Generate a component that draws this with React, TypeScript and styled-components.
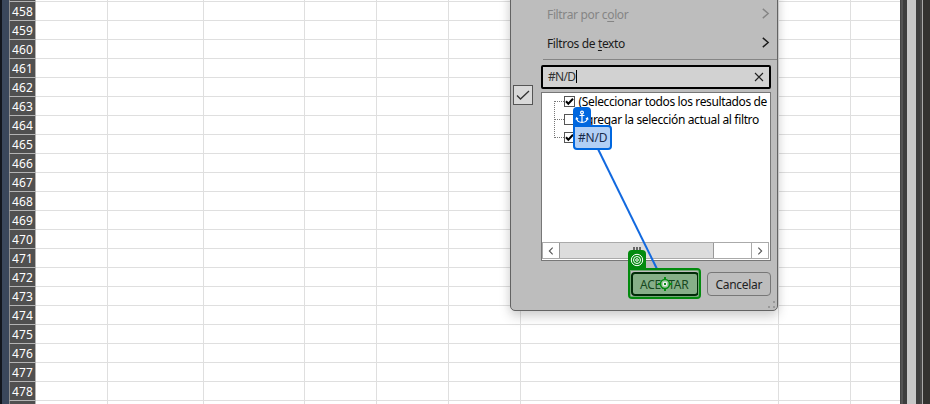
import React from "react";
import styled, { createGlobalStyle } from "styled-components";

const Global = createGlobalStyle`
  * { box-sizing: border-box; }
  body { margin: 0; background: #fff; overflow: hidden; font-family: "Noto Sans", "Open Sans", sans-serif; }
`;
const Screen = styled.div`
  position: relative; display: flex; width: 930px; height: 404px; overflow: hidden; background: #fff;
`;
const Strip = styled.div<{ $w: number; $c: string }>`
  flex: none; width: ${p => p.$w}px; background: ${p => p.$c};
`;
const Sheet = styled.div`
  width: 891px; height: 404px; flex: none; display: flex; flex-direction: column; overflow: hidden;
`;
const Row = styled.div<{ $h: number }>`
  flex: none; display: flex; height: ${p => p.$h}px;
`;
const RowHeader = styled.div`
  width: 27px; flex: none; background: #505050; color: #fff;
  border: solid #b4b4b4; border-width: 0 1px 1px 1px; border-left-color: #8c8c8c;
  font-size: 12px; line-height: 18px; text-align: center; padding-top: 1px; letter-spacing: 0.15px;
`;
const Cell = styled.div<{ $w: number; $last?: boolean }>`
  width: ${p => p.$w}px; flex: none;
  border-bottom: 1px solid #dfdfdf; border-right: ${p => (p.$last ? 0 : 1)}px solid #dfdfdf;
`;
const Panel = styled.section`
  position: absolute; left: 510px; top: -10px; width: 268px; height: 321px;
  background: #bdbdbd; border: 1px solid #636363; border-radius: 0 0 5px 5px;
  box-shadow: 0 6px 12px rgba(0,0,0,.16), 0 0 10px rgba(0,0,0,.07);
  color: #1b1b1b; font-size: 12px; display: flex; padding-top: 9px;
`;
const Gutter = styled.div`
  width: 30px; flex: none; padding: 85px 0 0 2px;
`;
const CheckButton = styled.div`
  width: 20px; height: 20px; border: 1px solid #555; background: #d9d9d9; display: flex;
`;
const Body = styled.div`
  width: 236px; flex: none; display: flex; flex-direction: column;
`;
const MenuItem = styled.div<{ $disabled?: boolean }>`
  height: 29px; display: flex; align-items: center; justify-content: space-between;
  padding: 0 5px 0 6px; color: ${p => (p.$disabled ? "#858585" : "#1b1b1b")};
  u { text-decoration-thickness: 1px; text-underline-offset: 2px; }
  svg { position: relative; top: -1px; }
`;
const Text = styled.span<{ $w: number; $s?: number }>`
  display: block; width: ${p => p.$w}px; white-space: nowrap; letter-spacing: ${p => p.$s ?? 0}px;
`;
const Rule = styled.div`
  height: 1px; background: #858585; margin: 1px 0 5px 2px; flex: none;
`;
const Search = styled.div`
  height: 24px; width: 230px; flex: none; border: 2px solid #000; border-radius: 2px; background: #d2d2d2;
  display: flex; align-items: center; padding: 0 5px 1px 5px; justify-content: space-between; color: #333;
`;
const Caret = styled.i`
  display: inline-block; width: 1px; height: 13px; background: #000; vertical-align: -2px; margin-left: 1px;
`;
const List = styled.div`
  width: 230px; height: 169px; flex: none; margin-top: 3px; background: #fff; border: 1px solid #777;
  display: flex; flex-direction: column; justify-content: space-between; overflow: hidden;
`;
const Tree = styled.div`
  position: relative; color: #000; height: 55px; margin-top: -1px;
`;
const TreeRow = styled.div`
  height: 18px; display: flex; align-items: center; padding-left: 13px;
  &::before { content: ""; width: 9px; border-top: 1px dotted #777; }
`;
const TreeStem = styled.div`
  position: absolute; left: 12px; top: 9px; height: 37px; border-left: 1px dotted #777;
`;
const Box = styled.span`
  width: 11px; height: 11px; border: 1px solid #555; margin-right: 4px; display: flex; background: #fff; flex: none;
`;
const ScrollBar = styled.div`
  height: 17px; display: flex; border: 1px solid #aaa; margin: 0 1px 1px 0; flex: none;
`;
const ScrollButton = styled.div`
  width: 16px; display: flex; align-items: center; justify-content: center;
`;
const Thumb = styled.div`
  width: 155px; background: #dcdcdc; border: solid #999; border-width: 0 1px; display: flex; justify-content: center; padding-top: 4px;
`;
const Track = styled.div`flex: 1; border-right: 1px solid #aaa;`;
const Buttons = styled.div`
  display: flex; margin-top: 11px; gap: 8px; padding-left: 90px;
`;
const Button = styled.div<{ $primary?: boolean }>`
  height: 24px; width: ${p => (p.$primary ? 68 : 64)}px; flex: none;
  border: ${p => (p.$primary ? "2px solid #002b07" : "1px solid #777")}; border-radius: 4px;
  background: ${p => (p.$primary ? "#86af88" : "#bdbdbd")}; color: ${p => (p.$primary ? "#174820" : "#222")};
  display: flex; align-items: center; justify-content: center;
`;
const Overlay = styled.div<{ $x: number; $y: number; $w: number; $h: number }>`
  position: absolute; left: ${p => p.$x}px; top: ${p => p.$y}px; width: ${p => p.$w}px; height: ${p => p.$h}px;
`;
const AnchorTag = styled(Overlay)`
  background: #0067df; border-radius: 4px 4px 0 0; display: flex; align-items: center; justify-content: center;
`;
const AnchorTarget = styled(Overlay)`
  border: 2px solid #0067df; border-radius: 0 4px 4px 4px; background: #b2cff5; color: #182b4c;
  font-size: 12px; line-height: 21px; padding-left: 3px;
`;
const TargetTag = styled(AnchorTag)`background: #038a0e;`;
const TargetFrame = styled(Overlay)`
  border: 2px solid #038a0e; border-radius: 0 4px 4px 4px; box-shadow: inset 0 0 0 1px #6fa873;
`;

const columns = [72, 96, 101, 72, 72, 72, 258, 72];
const rows = Array.from({ length: 21 }, (_, i) => 458 + i);

const Cells = () => <>{columns.map((w, i) => <Cell key={i} $w={w} />)}<Cell $w={49} $last /></>;
const Chevron = ({ size = 13, flip = false, color = "currentColor" }) => (
  <svg width={size} height={size} viewBox="0 0 12 12" fill="none" stroke={color} strokeWidth="1.3">
    <path d={flip ? "M8 2 4 6l4 4" : size < 12 ? "m4 2 4 4-4 4" : "m3.5 1.7 5 4.3-5 4.3"} />
  </svg>
);
const Tick = () => (
  <svg width="9" height="9" viewBox="0 0 9 9" fill="none" stroke="#000" strokeWidth="2"><path d="m1 4.3 2.3 2.4L8 1.8" /></svg>
);

export default function App() {
  return (
    <Screen>
      <Global />
      <Strip $w={2} $c="#12161d" /><Strip $w={7} $c="#3a475b" />
      <Sheet>
        <Row $h={2}><RowHeader /><Cells /></Row>
        {rows.map(n => <Row key={n} $h={19}><RowHeader>{n}</RowHeader><Cells /></Row>)}
        <Row $h={19}><RowHeader /><Cells /></Row>
      </Sheet>
      <Strip $w={1} $c="#444" /><Strip $w={2} $c="#535353" /><Strip $w={4} $c="#3d3d3d" />
      <Strip $w={9} $c="#c7c7c7" /><Strip $w={4} $c="#3d3d3d" /><Strip $w={2} $c="#494949" />
      <Strip $w={1} $c="#aaa" /><Strip $w={7} $c="#333230" />
      <Panel>
        <Gutter>
          <CheckButton><svg width="18" height="18" viewBox="0 0 18 18" fill="none" stroke="#333" strokeWidth="1.3"><path d="m3 9.5 3.5 3.5L15 5" /></svg></CheckButton>
        </Gutter>
        <Body>
          <MenuItem $disabled><Text $w={84} $s={-0.35}>Filtrar por c<u>o</u>lor</Text><Chevron /></MenuItem>
          <MenuItem><Text $w={80} $s={-0.36}>Filtros de <u>t</u>exto</Text><Chevron /></MenuItem>
          <Rule />
          <Search>
            <Text $w={40} $s={-0.7}>#N/D<Caret /></Text>
            <svg width="10" height="10" viewBox="0 0 10 10" stroke="#222" strokeWidth="1.1"><path d="m1 1 8 8M9 1 1 9" /></svg>
          </Search>
          <List>
            <Tree>
              <TreeStem />
              <TreeRow><Box><Tick /></Box><Text $w={200} $s={-0.37}>(Seleccionar todos los resultados de</Text></TreeRow>
              <TreeRow><Box /><Text $w={200} $s={-0.35}>Agregar la selección actual al filtro</Text></TreeRow>
              <TreeRow><Box><Tick /></Box></TreeRow>
            </Tree>
            <ScrollBar>
              <ScrollButton><Chevron flip size={10} color="#555" /></ScrollButton>
              <Thumb><svg width="8" height="6" stroke="#666" strokeWidth="2"><path d="M1 0v5M4 0v5M7 0v5" /></svg></Thumb>
              <Track />
              <ScrollButton><Chevron size={10} color="#555" /></ScrollButton>
            </ScrollBar>
          </List>
          <Buttons>
            <Button $primary><Text $w={50} $s={-0.2}>ACEPTAR</Text></Button>
            <Button><Text $w={47} $s={-0.3}>Cancelar</Text></Button>
          </Buttons>
        </Body>
      </Panel>
      <Overlay as="svg" $x={767} $y={300} $w={9} $h={9} fill="#999">
        <path d="M6 1h2v2h-2zM1 6h2v2h-2zM6 6h2v2h-2z" />
      </Overlay>
      <Overlay as="svg" $x={590} $y={145} $w={80} $h={130} fill="none" stroke="#1269df" strokeWidth="2">
        <path d="m8 4 59 120" />
      </Overlay>
      <AnchorTag $x={573} $y={107} $w={18} $h={19}>
        <svg width="14" height="14" viewBox="0 0 14 14" fill="none" stroke="#fff" strokeWidth="1.2"><circle cx="7" cy="2.5" r="1.4" /><path d="M7 4v8M4.5 5.5h5M1.5 8c.4 2.8 2.3 4.4 5.5 4.4S12.1 10.8 12.5 8M1 9.6 1.5 8l1.6 1M13 9.6 12.5 8l-1.6 1" /></svg>
      </AnchorTag>
      <AnchorTarget $x={573} $y={125} $w={39} $h={25}><Text $w={33} $s={-0.2}>#N/D</Text></AnchorTarget>
      <TargetTag $x={628} $y={250} $w={18} $h={19}>
        <svg width="14" height="14" viewBox="0 0 14 14" fill="none" stroke="#fff"><circle cx="7" cy="7" r="5.7" /><circle cx="7" cy="7" r="3.5" /><circle cx="7" cy="7" r="1.3" /></svg>
      </TargetTag>
      <TargetFrame $x={628} $y={268} $w={73} $h={31} />
      <Overlay as="svg" $x={658} $y={277} $w={14} $h={14} viewBox="0 0 14 14" fill="none">
        <path d="M7 0v14M0 7h14" stroke="#078e13" strokeWidth="2" /><circle cx="7" cy="7" r="4.5" fill="#a5c6a7" stroke="#078e13" strokeWidth="1.6" /><circle cx="7" cy="7" r="2.2" fill="#fff" /><circle cx="7" cy="7" r="1.2" fill="#078e13" />
      </Overlay>
    </Screen>
  );
}
